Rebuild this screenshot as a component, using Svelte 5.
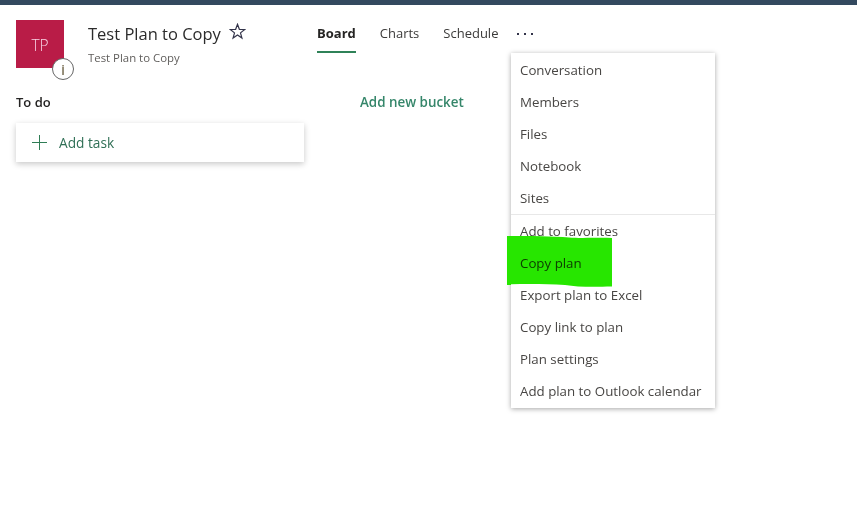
<script>
	const tabs = ['Board', 'Charts', 'Schedule'];
	const groupA = ['Conversation', 'Members', 'Files', 'Notebook', 'Sites'];
	const groupB = [
		'Add to favorites',
		'Copy plan',
		'Export plan to Excel',
		'Copy link to plan',
		'Plan settings',
		'Add plan to Outlook calendar'
	];
</script>

<div class="topbar"></div>

<header class="header">
	<div class="plan">
		<div class="avatar">
			TP
			<span class="info">i</span>
		</div>
		<div class="titles">
			<div class="title-row">
				<h1>Test Plan to Copy</h1>
				<svg class="star" width="17" height="17" viewBox="0 0 16 16">
					<path
						d="M8 1.200l1.750 4.750 5.050.2-3.970 3.120 1.360 4.870L8 11.350l-4.190 2.790 1.360-4.870L1.200 6.150l5.050-.2z"
						fill="none"
						stroke="#33344a"
						stroke-width="1.100"
					/>
				</svg>
			</div>
			<div class="subtitle">Test Plan to Copy</div>
		</div>
	</div>

	<nav class="tabs">
		{#each tabs as tab, i}
			<span class="tab" class:active={i == 0}>{tab}</span>
		{/each}
		<span class="more">
			<i></i><i></i><i></i>
		</span>
	</nav>
</header>

<main class="board">
	<section class="bucket">
		<h2>To do</h2>
		<div class="add-task">
			<svg width="16" height="16" viewBox="0 0 16 16">
				<path d="M7.500 0v15M0 7.500h15" stroke="#2f7d55" stroke-width="1" fill="none" />
			</svg>
			<span>Add task</span>
		</div>
	</section>
	<div class="add-bucket">Add new bucket</div>
</main>

<div class="menu">
	{#each groupA as item}
		<div class="item">{item}</div>
	{/each}
	<div class="sep"></div>
	{#each groupB as item}
		<div class="item">{item}</div>
	{/each}
</div>

<!-- marker scribble over the menu, the edge strip hides the menu shadow under it -->
<div class="marker-edge"></div>
<svg class="marker" width="106" height="54" viewBox="0 0 106 54">
	<path
		d="M1 2C20 2 45 2 62 3.500 72 4.500 90 3.500 105 4V52.500C85 53 70 53 58 51 40 50 20 49.500 0 50.500z"
		fill="#27e600"
	/>
</svg>

<style>
	:global(body) {
		margin: 0;
		min-height: 517px;
		background: #fff;
		font-family: 'Open Sans', 'Noto Sans', sans-serif;
		color: #252423;
	}
	.topbar {
		height: 5px;
		background: #33495f;
	}
	.header {
		display: flex;
		padding: 15px 0 0 16px;
		height: 52px;
	}
	.plan {
		display: flex;
		width: 301px;
	}
	.avatar {
		position: relative;
		width: 48px;
		height: 48px;
		background: #b91c47;
		color: #f8d3e4;
		font-size: 15.500px;
		font-weight: 300;
		line-height: 50px;
		text-align: center;
	}
	.info {
		position: absolute;
		left: 36px;
		top: 38px;
		width: 22px;
		height: 22px;
		box-sizing: border-box;
		border: 1px solid #666;
		border-radius: 50%;
		background: #fff;
		color: #4a3c18;
		font-size: 14px;
		font-weight: 400;
		line-height: 21px;
		text-align: center;
	}
	.titles {
		margin-left: 24px;
	}
	.title-row {
		display: flex;
		align-items: center;
		height: 26px;
	}
	h1 {
		margin: 0;
		font-size: 16.500px;
		font-weight: 500;
		color: #2b2b2b;
	}
	.star {
		margin: -4px 0 0 8px;
	}
	.subtitle {
		margin-top: 4px;
		font-size: 11.400px;
		color: #605e5c;
	}
	.tabs {
		display: flex;
		height: 33px;
		gap: 24px;
	}
	.tab {
		height: 31px;
		padding-top: 4px;
		font-size: 13px;
		line-height: 18px;
		color: #3b3a39;
	}
	.tab.active {
		font-weight: 700;
		color: #252423;
		border-bottom: 2px solid #2f8258;
		height: 27px;
	}
	.more {
		display: flex;
		gap: 5px;
		margin: 13px 0 0 -5px;
	}
	.more i {
		width: 2px;
		height: 2px;
		background: #33344a;
	}
	.board {
		display: flex;
		padding: 21px 0 0 16px;
	}
	.bucket {
		width: 288px;
	}
	h2 {
		margin: 0;
		font-size: 13px;
		line-height: 18px;
		font-weight: 600;
		color: #252423;
	}
	.add-task {
		display: flex;
		align-items: center;
		gap: 11px;
		height: 39px;
		margin-top: 12px;
		padding-left: 16px;
		background: #fff;
		box-shadow: 0 2px 6px rgba(0, 0, 0, 0.22);
		font-size: 13.700px;
		color: #2f6f55;
	}
	.add-bucket {
		margin-left: 56px;
		font-size: 13.400px;
		line-height: 18px;
		font-weight: 600;
		color: #35866a;
	}
	.menu {
		position: absolute;
		left: 511px;
		top: 53px;
		width: 204px;
		padding: 1px 0;
		box-sizing: border-box;
		background: #fff;
		box-shadow: 0 1px 5px rgba(0, 0, 0, 0.35);
	}
	.item {
		height: 32px;
		line-height: 32px;
		padding-left: 9px;
		font-size: 13.300px;
		white-space: nowrap;
		color: #484644;
	}
	.sep {
		height: 1px;
		background: #e8e8e8;
	}
	.marker-edge {
		position: absolute;
		left: 507px;
		top: 236px;
		width: 4px;
		height: 49px;
		background: #27e600;
	}
	.marker {
		position: absolute;
		left: 507px;
		top: 234px;
		clip-path: inset(0 0 0 4px);
		mix-blend-mode: multiply;
	}
</style>
